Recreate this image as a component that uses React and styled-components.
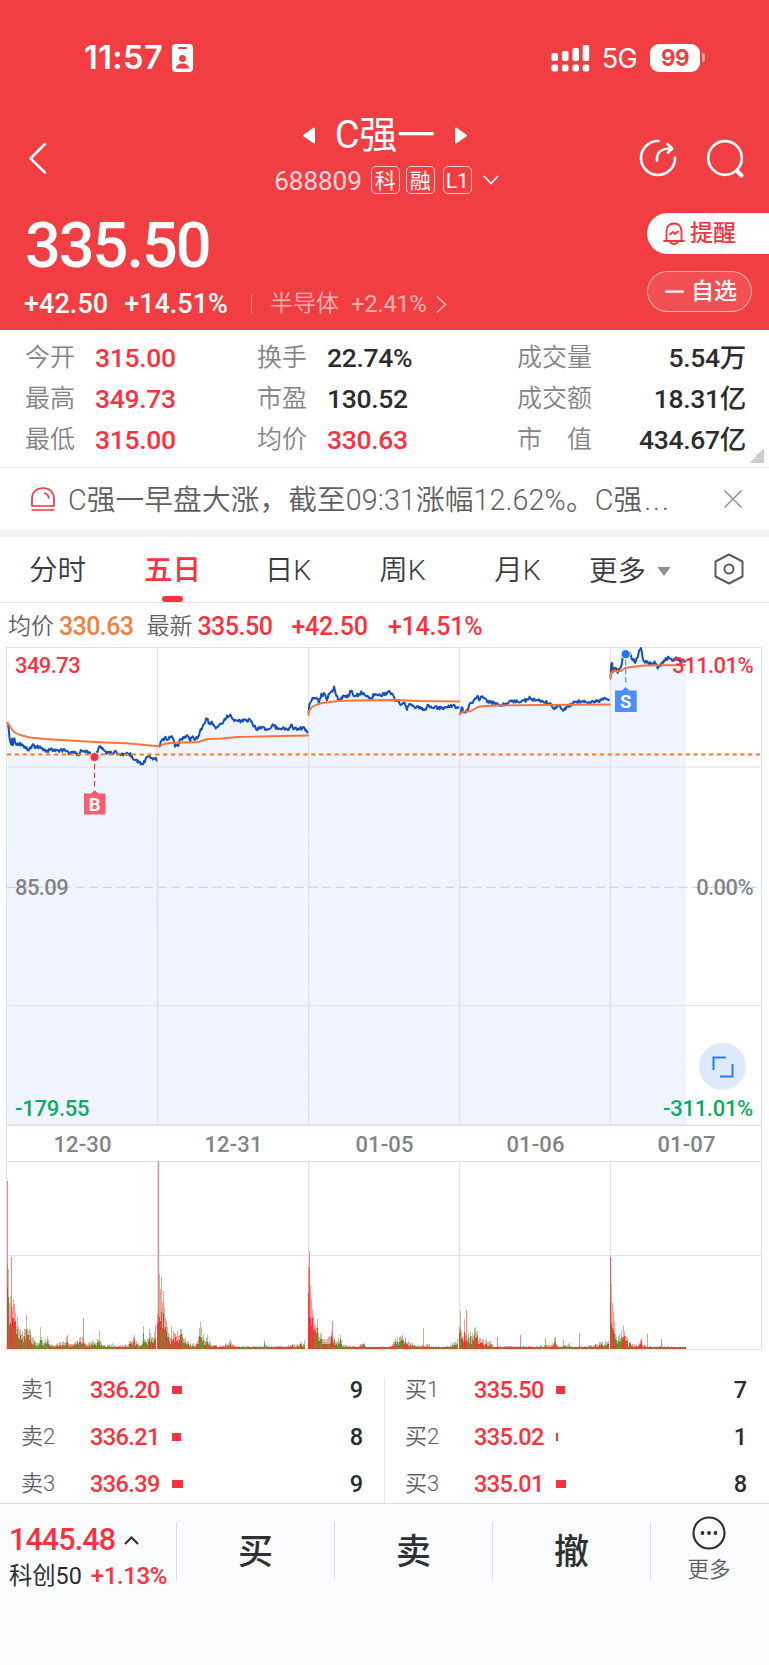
import React from 'react'
import styled, { createGlobalStyle } from 'styled-components'

const RED = '#f9323f'
const GREEN = '#0bab5f'
const INK = '#2c2c2e'

const GlobalStyle = createGlobalStyle`
  * { box-sizing: border-box; }
  body {
    margin: 0;
    background: #fff;
    font-family: Roboto, "Noto Sans CJK SC", sans-serif;
    color: ${INK};
  }
  svg { display: block; flex: none; }
`

const Page = styled.div`
  width: 769px;
  height: 1665px;
  display: flex;
  flex-direction: column;
  overflow: hidden;
  background: #fff;
`

const Text = styled.span`
  font-size: ${p => p.$size}px;
  line-height: ${p => p.$line || 40}px;
  font-weight: ${p => p.$weight || 400};
  color: ${p => p.$color || 'inherit'};
  letter-spacing: ${p => p.$track || 0}px;
  margin-left: ${p => p.$gap || 0}px;
  white-space: pre;
`

/* ---------- header ---------- */

const Header = styled.header`
  height: 330px;
  flex: none;
  background: #f03e42;
  color: #fff;
  display: flex;
  flex-direction: column;
`

const StatusBar = styled.div`
  height: 101px;
  padding: 14px 64px 0 84px;
  display: flex;
  align-items: center;
  justify-content: space-between;
`

const StatusSide = styled.div`
  display: flex;
  align-items: center;
`

const Clock = styled.span`
  font: 600 32.5px/40px Inter, sans-serif;
  letter-spacing: 0.4px;
  margin-right: 9px;
`

const Network = styled.span`
  font: 400 27px/40px Inter, sans-serif;
  letter-spacing: -0.6px;
  margin: 2px 13px 0 12px;
`

const Battery = styled.div`
  width: 50px;
  height: 28px;
  border-radius: 9px;
  background: #fff;
  color: #f03e42;
  font: 700 22.5px/28px Inter, sans-serif;
  letter-spacing: -0.5px;
  text-align: center;
`

const BatteryNub = styled.div`
  width: 3px;
  height: 9px;
  margin-left: 2px;
  border-radius: 0 3px 3px 0;
  background: rgba(255, 255, 255, 0.5);
`

const NavBar = styled.div`
  height: 108px;
  padding: 14px 25px 0 28px;
  display: grid;
  grid-template-columns: 130px 1fr 130px;
`

const NavSide = styled.div`
  display: flex;
  align-items: center;
  gap: 27px;
  height: 86px;
  justify-content: ${p => (p.$end ? 'flex-end' : 'flex-start')};
`

const NavTitle = styled.div`
  display: flex;
  flex-direction: column;
  align-items: center;
`

const TitleRow = styled.div`
  display: flex;
  align-items: center;
  gap: 20px;
  height: 41px;
  margin-right: 2px;
`

const CodeRow = styled.div`
  display: flex;
  align-items: center;
  height: 28px;
  margin: 10px 0 0 1px;
`

const Tag = styled.span`
  width: 29px;
  height: 28px;
  border: 1px solid rgba(255, 255, 255, 0.75);
  border-radius: 5px;
  margin-left: ${p => p.$gap}px;
  font-size: 21px;
  line-height: 28px;
  font-weight: ${p => p.$weight || 400};
  text-align: center;
`

const Quote = styled.div`
  height: 121px;
  display: flex;
  justify-content: space-between;
`

const QuoteMain = styled.div`
  padding-left: 25px;
  display: flex;
  flex-direction: column;
`

const BigPrice = styled.div`
  font-size: 63px;
  font-weight: 500;
  line-height: 73px;
  letter-spacing: -2px;
`

const ChangeRow = styled.div`
  display: flex;
  align-items: center;
  height: 40px;
  margin: 2px 0 0 -1px;
`

const Divider = styled.div`
  width: 1px;
  height: ${p => p.$h}px;
  background: ${p => p.$color};
  margin: ${p => p.$margin || 0};
`

const QuoteActions = styled.div`
  width: 122px;
  padding-top: 4px;
  display: flex;
  flex-direction: column;
  gap: 17px;
`

const Pill = styled.div`
  display: flex;
  align-items: center;
  height: 41px;
  width: ${p => (p.$solid ? 122 : 105)}px;
  padding-left: ${p => (p.$solid ? 16 : 17)}px;
  border-radius: ${p => (p.$solid ? '21px 0 0 21px' : '21px')};
  border: ${p => (p.$solid ? 'none' : '1px solid rgba(255,255,255,0.55)')};
  background: ${p => (p.$solid ? '#fff' : 'rgba(255,255,255,0.1)')};
  color: ${p => (p.$solid ? RED : '#fff')};
`

/* ---------- key figures ---------- */

const Stats = styled.section`
  height: 138px;
  flex: none;
  display: grid;
  grid-template-columns: 232px 260px 229px;
  padding: 7px 0 0 25px;
  border-bottom: 1px solid #e9e9ec;
  background: linear-gradient(135deg, transparent 50%, #ccc 50%) no-repeat 749px 118px / 15px 15px;
`

const StatColumn = styled.div`
  display: flex;
  flex-direction: column;
`

const StatLine = styled.div`
  display: flex;
  height: 41px;
  align-items: center;
  justify-content: ${p => (p.$spread ? 'space-between' : 'flex-start')};
`

const StatLabel = styled.span`
  font-size: 25px;
  font-weight: 350;
  line-height: 41px;
  width: ${p => (p.$wide ? 90 : 70)}px;
  color: #838386;
  white-space: pre;
`

const StatValue = styled.span`
  font-size: 26.5px;
  font-weight: 500;
  line-height: 41px;
  letter-spacing: -0.3px;
  color: ${p => (p.$up ? RED : INK)};
`

/* ---------- news strip and tabs ---------- */

const News = styled.section`
  height: 62px;
  flex: none;
  display: flex;
  align-items: center;
  padding: 0 27px 0 31px;
`

const NewsText = styled.span`
  flex: 1;
  margin-left: 13px;
  padding-top: 3px;
  font-size: 28.7px;
  font-weight: 350;
  line-height: 59px;
  letter-spacing: 0.1px;
  color: #5f5f62;
  white-space: pre;
`

const Ellipsis = styled.span`
  margin-left: 2px;
  letter-spacing: 2px;
`

const Band = styled.div`
  height: 7px;
  flex: none;
  background: #f2f4fa;
`

const Tabs = styled.nav`
  height: 66px;
  flex: none;
  display: flex;
  border-bottom: 1px solid #e2e2e5;
`

const Tab = styled.div`
  width: ${p => p.$w || 115}px;
  display: flex;
  flex-direction: column;
  align-items: center;
  font-size: 28.5px;
  line-height: 59px;
  padding-top: 4px;
  font-weight: ${p => (p.$on ? 500 : 350)};
  color: ${p => (p.$on ? RED : '#3c3c3f')};
`

const TabMark = styled.div`
  width: 21px;
  height: 6px;
  margin-top: -4px;
  border-radius: 3px;
  background: ${RED};
`

const TabMore = styled.div`
  display: flex;
  align-items: center;
  gap: 11px;
  margin-left: 13px;
  font-size: 28.5px;
  font-weight: 350;
  line-height: 61px;
  padding-top: 3px;
  color: #3c3c3f;
`

const TabSettings = styled.div`
  display: flex;
  align-items: center;
  margin-left: 43px;
  padding-bottom: 1px;
`

const Legend = styled.div`
  height: 37px;
  flex: none;
  display: flex;
  align-items: center;
  padding: 11px 0 0 8px;
`

/* ---------- charts ---------- */

const ChartBox = styled.section`
  position: relative;
  height: 715px;
  flex: none;
`

const ChartLabel = styled.span`
  position: absolute;
  top: ${p => p.$top}px;
  ${p => (p.$right ? 'right: 16px;' : 'left: 15px;')}
  font-size: 22px;
  font-weight: ${p => p.$weight || 500};
  line-height: 26px;
  letter-spacing: ${p => p.$track || -0.6}px;
  color: ${p => p.$color};
`

const DateRow = styled.div`
  position: absolute;
  left: 7px;
  top: 486px;
  width: 755px;
  height: 36px;
  display: grid;
  grid-template-columns: repeat(5, 151px);
  text-align: center;
  font-size: 22px;
  line-height: 37px;
  font-weight: 500;
  letter-spacing: 0.1px;
  color: #838386;
`

const Expand = styled.div`
  position: absolute;
  left: 699px;
  top: 403px;
  width: 47px;
  height: 47px;
  border-radius: 50%;
  background: #dfe9fe;
  display: flex;
  align-items: center;
  justify-content: center;
`

/* ---------- order book ---------- */

const Book = styled.section`
  height: 148px;
  flex: none;
  padding-top: 12px;
  display: grid;
  grid-template-columns: 384px 385px;
`

const BookSide = styled.div`
  margin-top: ${p => (p.$line ? 11 : 0)}px;
  padding-top: ${p => (p.$line ? 0 : 11)}px;
  border-left: ${p => (p.$line ? '1px solid #e6e6ea' : 'none')};
  padding-left: ${p => (p.$line ? 20 : 21)}px;
  padding-right: ${p => (p.$line ? 22 : 21)}px;
`

const BookRow = styled.div`
  display: grid;
  grid-template-columns: 69px 82px 1fr auto;
  align-items: center;
  height: 47px;
  padding-bottom: 23px;
`

const SizeBar = styled.div`
  height: 8px;
  background: ${RED};
`

/* ---------- bottom bar ---------- */

const BottomBar = styled.footer`
  flex: 1;
  border-top: 1px solid #dcdde5;
  background: #fafbfd;
  display: flex;
  align-items: flex-start;
`

const IndexCell = styled.div`
  width: 176px;
  padding: 16px 0 0 9px;
  display: flex;
  flex-direction: column;
`

const IndexLine = styled.div`
  display: flex;
  align-items: center;
  height: ${p => p.$h}px;
`

const Action = styled.div`
  width: ${p => p.$w || 158}px;
  height: 58px;
  margin-top: 18px;
  border-left: 1px solid #dcdce2;
  font-size: 35px;
  font-weight: 500;
  line-height: 62px;
  text-align: center;
  color: #303033;
`

const MoreAction = styled(Action)`
  flex: 1;
  display: flex;
  flex-direction: column;
  align-items: center;
  padding-right: 2px;
  font-size: 21.5px;
  font-weight: 350;
  line-height: 30px;
  color: #5f5f62;
  svg { margin-top: -6px; margin-bottom: 5px; }
`

/* ---------- data ---------- */

const stats = [
  [['今开', '315.00', true], ['最高', '349.73', true], ['最低', '315.00', true]],
  [['换手', '22.74%'], ['市盈', '130.52'], ['均价', '330.63', true]],
  [['成交量', '5.54万'], ['成交额', '18.31亿'], ['市　值', '434.67亿']],
]

const asks = [['卖1', '336.20', 10, 9], ['卖2', '336.21', 9, 8], ['卖3', '336.39', 11, 9]]
const bids = [['买1', '335.50', 9, 7], ['买2', '335.02', 2, 1], ['买3', '335.01', 10, 8]]

const priceDays = [
  [8,83, 9,90, 10,102, 11,106, 12,98, 13,106, 14,98, 15,102, 16,105, 20,104, 22,106, 25,106, 27,109, 29,110, 31,107, 33,104, 35,107, 40,107, 42,109, 48,111, 51,109, 55,111, 64,110, 68,113, 74,113, 79,114, 82,110, 86,111, 89,113, 91,115, 97,113, 99,107, 102,108, 105,110, 106,113, 110,113, 115,112, 120,114, 130,114, 133,118, 137,121, 142,124, 145,121, 147,117, 149,117, 152,119, 154,117, 157,120],
  [159,108, 161,101, 165,98, 168,99, 171,96, 174,102, 175,106, 178,106, 180,100, 184,97, 187,96, 190,100, 192,97, 195,100, 198,97, 200,91, 204,84, 206,79, 207,78, 209,83, 212,83, 215,86, 216,89, 219,84, 223,84, 226,77, 231,75, 233,81, 236,80, 240,81, 250,80, 254,86, 257,89, 262,87, 266,90, 270,88, 273,84, 276,88, 283,88, 285,90, 290,88, 291,85, 294,89, 304,88, 308,92],
  [308.5,73, 309,64, 311,62, 313,57, 315,60, 317,57, 319,63, 321,55, 325,54, 327,59, 330,53, 333,50, 334,46, 336,55, 338,59, 341,59, 343,56, 346,57, 349,55, 351,50, 353,55, 358,55, 362,52, 364,55, 371,58, 375,54, 379,56, 384,54, 389,52, 392,54, 395,60, 399,62, 402,65, 405,63, 407,69, 410,63, 413,67, 418,67, 422,69, 425,71, 428,65, 432,67, 440,68, 447,67, 454,65, 456,69, 459,67],
  [460,74, 462,67, 464,72, 466,73, 470,64, 473,62, 476,58, 478,55, 479,61, 482,56, 485,60, 489,62, 493,63, 500,65, 505,64, 509,62, 521,61, 527,60, 530,57, 533,60, 540,61, 546,62, 551,65, 555,69, 559,65, 563,70, 567,67, 571,65, 574,61, 583,62, 592,62, 598,61, 604,59, 610,59],
  [610.5,37, 611,25, 612,23, 613,32, 615,28, 618,32, 620,27, 622,24, 623,14, 624,9, 626,15, 630,13, 632,18, 635,22, 637,19, 639,10, 641,8, 643,20, 646,22, 650,24, 655,22, 658,28, 662,23, 665,20, 669,17, 673,20, 676,18, 680,21, 686,21],
]

const averageDays = [
  [7,83, 8,83, 11,88, 14,92, 20,95, 30,97.5, 45,99, 70,100.5, 95,102, 130,103.5, 145,105, 156,106, 160,106, 164,104, 170,103, 198,102, 208,99, 222,98.5, 238,97, 260,96.5, 308,95.5],
  [308.5,75, 309,71, 312,67, 316,65, 322,63, 330,62, 338,61, 355,60.5, 395,60, 420,61, 459,61.5],
  [459.5,74.5, 463,71.5, 470,71.5, 473,70, 478,67, 485,66, 500,65.5, 540,65, 610,64.5],
  [610.5,39, 611,33, 613,31, 621,31, 625,28, 635,26.5, 645,25.5, 685,25],
]

// x, bar height
const volumeDays = [
  [7,84, 8,80, 9,46, 10,52, 12,42, 13,50, 15,36, 17,32, 20,20, 25,20, 26,34, 27,20, 30,19, 35,8, 39,8, 40,22, 41,12, 45,10, 47,13, 49,5, 56,5, 60,7, 67,14, 68,6, 75,8, 80,12, 82,12, 86,5, 92,9, 95,6, 99,18, 102,4, 112,6, 115,3, 125,5, 130,8, 134,14, 138,6, 142,8, 143,23, 145,9, 148,10, 149,20, 152,12, 155,24],
  [157,35, 159,75, 161,72, 163,58, 164,42, 166,28, 168,16, 171,23, 174,16, 181,20, 187,8, 192,5, 197,8, 200,27, 203,15, 207,14, 210,6, 216,4, 220,3, 230,9, 235,3, 263,3, 264,9, 267,3, 290,4, 304,9],
  [308,82, 309,80, 310,64, 311,50, 313,33, 315,24, 317,30, 318,16, 321,16, 324,10, 331,18, 334,11, 340,14, 343,4, 355,3, 363,6, 366,2, 390,3, 397,12, 402,14, 408,8, 415,4, 422,4, 426,5, 440,2, 450,4, 457,10],
  [459,22, 460,38, 462,13, 464,30, 465,14, 470,18, 475,22, 480,11, 485,9, 490,8, 493,3, 519,3, 525,3, 540,4, 550,4, 554,11, 558,3, 569,6, 572,2, 590,4, 600,7, 608,8],
  [610,92, 611,65, 612,46, 613,38, 614,28, 616,12, 619,15, 623,23, 626,12, 632,5, 638,4, 641,11, 644,4, 650,3, 668,3, 672,1.5, 685,1],
]

// x, height, rising
const spikes = [
  [7,168,1], [11,92,1], [83,31,1], [158,188,1], [309,98,1], [332,28,1], [423,21,0], [466,39,1],
  [497,12,1], [520,14,1], [545,11,0], [555,12,0], [563,9,0], [579,16,0], [610,92,1], [647,15,0], [661,10,1],
]

function pairs(flat) {
  const out = []
  for (let i = 0; i < flat.length; i += 2) out.push([flat[i], flat[i + 1]])
  return out
}

function noise(n) {
  const v = Math.sin(n * 127.1 + 11.7) * 43758.5453
  return v - Math.floor(v)
}

function valueAt(pts, x) {
  for (let i = 1; i < pts.length; i++) {
    if (x <= pts[i][0]) {
      const [x0, y0] = pts[i - 1]
      const [x1, y1] = pts[i]
      return y0 + ((y1 - y0) * (x - x0)) / (x1 - x0)
    }
  }
  return pts[pts.length - 1][1]
}

function tickPath(flat) {
  const pts = pairs(flat)
  const end = pts[pts.length - 1][0]
  let d = ''
  for (let x = pts[0][0]; x <= end; x += 0.8) {
    const y = Math.max(8, valueAt(pts, x) + (noise(x) - 0.5) * 3.2)
    d += `${d ? 'L' : 'M'}${x.toFixed(1)} ${y.toFixed(1)}`
  }
  return d
}

const linePath = flat => 'M' + pairs(flat).map(p => p.join(' ')).join('L')

function areaPath(flat, next) {
  const pts = pairs(flat)
  return `M${pts[0][0] - 2} 486L${linePath(flat).slice(1)}L${next} ${pts[pts.length - 1][1]}V486Z`
}

const dayEnds = [157, 308, 459.5, 610, 686]

function VolumeBars() {
  const bars = []
  volumeDays.forEach((flat, day) => {
    const pts = pairs(flat)
    const keys = pts.map(p => p[0])
    for (let x = pts[0][0]; x <= pts[pts.length - 1][0]; x++) {
      const h = valueAt(pts, x) * (keys.includes(x) ? 1 : 0.5 + noise(x) * 0.55)
      const open = x - pts[0][0]
      const up = noise(x * 3.3 + day) > (day === 0 ? 0.6 : open < 8 ? 0.35 : 0.48)
      const main = up ? '#ff2f38' : '#579a31'
      const other = noise(x * 5.1) > 0.5 ? '#ff2f38' : '#579a31'
      bars.push(<rect key={`a${x}`} x={x} y={709 - h} width="1" height={h} fill={main} opacity="0.5" />)
      const low = Math.max(2, h * (0.4 + noise(x * 1.7) * 0.4))
      bars.push(<rect key={`b${x}`} x={x} y={709 - low} width="1" height={low} fill={main} />)
      bars.push(<rect key={`c${x}`} x={x} y={709 - low * 0.7} width="1" height={low * 0.7} fill={other} opacity="0.4" />)
    }
  })
  spikes.forEach(([x, h, up]) => {
    bars.push(<rect key={`s${x}`} x={x} y={709 - h} width="1" height={h} fill={up ? '#ff2f38' : '#579a31'} opacity="0.6" />)
  })
  return <g shapeRendering="crispEdges">{bars}</g>
}

function Charts() {
  return (
    <ChartBox>
      <svg width="769" height="715" viewBox="0 0 769 715">
        {priceDays.map((d, i) => <path key={i} d={areaPath(d, dayEnds[i])} fill="#eff4ff" />)}
        <g stroke="#e0e1e4" fill="none">
          <path d="M6.5 7V709.5H761.5V7.5H6.5M6.5 127H761.5M6.5 365.5H761.5M6.5 521.5H761.5M6.5 615.5H761.5" />
          <path d="M6.5 485.2H761.5" strokeWidth="1.6" />
          <path d="M157.6 7V485M308.6 7V485M459.6 7V485M610.4 7V485M157.6 521V709M308.6 521V709M459.6 521V709M610.4 521V709" strokeWidth="1.3" />
        </g>
        <path d="M7 247.3H761" stroke="#c9d6e2" strokeWidth="1.3" strokeDasharray="9 4.7" />
        {priceDays.map((d, i) => (
          <path key={i} d={tickPath(d)} fill="none" stroke="#1750b8" strokeWidth="2" strokeLinejoin="round" />
        ))}
        {averageDays.map((d, i) => (
          <path key={i} d={linePath(d)} fill="none" stroke="#fb7439" strokeWidth="1.9" strokeLinejoin="round" strokeLinecap="round" />
        ))}
        <path d="M7 114.5H761" stroke="#ff7a12" strokeWidth="2" strokeDasharray="4.3 3.5" />

        <path d="M94.5 124V148" stroke="#f9323f" strokeWidth="1.1" strokeDasharray="5.5 3" />
        <circle cx="94.5" cy="117" r="4.6" fill="#f9323f" stroke="#fff" strokeWidth="1" />
        <path d="M84 153.5H91L94.7 150L98.4 153.5H105.5V174.5H84Z" fill="#f85e6b" />
        <text x="94.7" y="170.5" textAnchor="middle" fontFamily="Roboto" fontWeight="700" fontSize="18.5" fill="#fff">B</text>

        <path d="M625.7 20V45" stroke="#4d8bfa" strokeWidth="1.1" strokeDasharray="5.5 3" />
        <circle cx="625.7" cy="14.2" r="4.6" fill="#1f74ff" stroke="#fff" strokeWidth="1" />
        <path d="M615 50.5H622L625.7 47L629.4 50.5H636.7V72H615Z" fill="#4d8dfc" />
        <text x="625.8" y="67.7" textAnchor="middle" fontFamily="Roboto" fontWeight="700" fontSize="18.5" fill="#fff">S</text>
        <VolumeBars />
      </svg>
      <ChartLabel $top={13} $color={RED}>349.73</ChartLabel>
      <ChartLabel $top={13} $color={RED} $right>311.01%</ChartLabel>
      <ChartLabel $top={235} $color="#838386">85.09</ChartLabel>
      <ChartLabel $top={235} $color="#838386" $right>0.00%</ChartLabel>
      <ChartLabel $top={456} $color={GREEN} $track={-0.25}>-179.55</ChartLabel>
      <ChartLabel $top={456} $color={GREEN} $track={-0.3} $right>-311.01%</ChartLabel>
      <Expand>
        <svg width="22" height="22" viewBox="0 0 22 22" fill="none" stroke="#2b7bff" strokeWidth="2">
          <path d="M1.5 14V1.5H14M20.5 8V20.5H8" />
        </svg>
      </Expand>
      <DateRow>
        {['12-30', '12-31', '01-05', '01-06', '01-07'].map(d => <span key={d}>{d}</span>)}
      </DateRow>
    </ChartBox>
  )
}

function TopHeader() {
  return (
    <Header>
      <StatusBar>
        <StatusSide>
          <Clock>11:57</Clock>
          <svg width="21" height="28" viewBox="0 0 21 28">
            <rect width="21" height="28" rx="4" fill="#fff" />
            <rect x="6" y="3" width="9" height="2" rx="1" fill="#f03e42" />
            <circle cx="10.5" cy="14.5" r="3.4" fill="#f03e42" />
            <path d="M4 24.5C4 21 7 19.5 10.5 19.5S17 21 17 24.5Z" fill="#f03e42" />
          </svg>
        </StatusSide>
        <StatusSide>
          <svg width="39" height="28" viewBox="0 0 39 28" fill="#fff">
            <rect x="0.5" y="9" width="6.5" height="8" rx="2" />
            <rect x="11" y="7" width="6.5" height="10" rx="2" />
            <rect x="21.5" y="4" width="6.5" height="13" rx="2" />
            <rect x="31.7" y="1" width="6.5" height="16" rx="2" />
            {[0.5, 11, 21.5, 31.7].map(x => <rect key={x} x={x} y="20.5" width="6.5" height="7" rx="2" />)}
          </svg>
          <Network>5G</Network>
          <Battery>99</Battery>
          <BatteryNub />
        </StatusSide>
      </StatusBar>

      <NavBar>
        <NavSide>
          <svg width="20" height="34" viewBox="0 0 20 34" fill="none" stroke="#fff" strokeWidth="2.5" strokeLinecap="round" strokeLinejoin="round">
            <path d="M17 3L2.5 17.5L17 31.5" />
          </svg>
        </NavSide>
        <NavTitle>
          <TitleRow>
            <svg width="12" height="17" viewBox="0 0 12 17">
              <path d="M11 1.5V15.5L1 8.5Z" fill="#fff" stroke="#fff" strokeWidth="2" strokeLinejoin="round" />
            </svg>
            <Text $size={38} $line={41}>C强一</Text>
            <svg width="12" height="17" viewBox="0 0 12 17">
              <path d="M1 1.5V15.5L11 8.5Z" fill="#fff" stroke="#fff" strokeWidth="2" strokeLinejoin="round" />
            </svg>
          </TitleRow>
          <CodeRow>
            <Text $size={26} $color="rgba(255,255,255,0.82)" $line={30} style={{ paddingTop: 2 }}>688809</Text>
            <Tag $gap={9}>科</Tag>
            <Tag $gap={6}>融</Tag>
            <Tag $gap={8}>L1</Tag>
            <svg width="16" height="10" viewBox="0 0 16 10" fill="none" stroke="#fff" strokeWidth="1.6" style={{ marginLeft: 11 }}>
              <path d="M1 1L8 8.6L15 1" />
            </svg>
          </CodeRow>
        </NavTitle>
        <NavSide $end>
          <svg width="40" height="40" viewBox="0 0 40 40" fill="none" stroke="#fff" strokeWidth="2.7" strokeLinecap="round" strokeLinejoin="round">
            <path d="M20.5 3A17 17 0 1 0 37 19.5" />
            <path d="M19 22.5C18.5 14 23 10.5 33 10.5M29.5 6L34.2 10.6L30 14.5" />
          </svg>
          <svg width="39" height="40" viewBox="0 0 39 40" fill="none" stroke="#fff" strokeWidth="2.7" strokeLinecap="round">
            <circle cx="20" cy="20" r="16.8" />
            <path d="M32 33L36.5 37.5" strokeWidth="4" />
          </svg>
        </NavSide>
      </NavBar>

      <Quote>
        <QuoteMain>
          <BigPrice>335.50</BigPrice>
          <ChangeRow>
            <Text $size={27} $weight={500} $track={0.05}>+42.50</Text>
            <Text $size={27} $weight={500} $gap={16}>+14.51%</Text>
            <Divider $h={20} $color="rgba(255,255,255,0.45)" $margin="0 18px 0 23px" />
            <Text $size={23} $weight={350} $color="rgba(255,255,255,0.6)">半导体</Text>
            <Text $size={24} $gap={12} $color="rgba(255,255,255,0.6)" $track={-0.4}>+2.41%</Text>
            <svg width="11" height="19" viewBox="0 0 11 19" fill="none" stroke="#fff" strokeOpacity="0.65" strokeWidth="1.5" style={{ marginLeft: 9 }}>
              <path d="M1 1.5L9.5 9.5L1 17.5" />
            </svg>
          </ChangeRow>
        </QuoteMain>
        <QuoteActions>
          <Pill $solid>
            <svg width="22" height="24" viewBox="0 0 22 24" fill="none" stroke={RED} strokeWidth="1.8" strokeLinecap="round" strokeLinejoin="round">
              <path d="M3.5 17.5V9.5C3.5 4.5 6.5 1.5 11 1.5S18.5 4.5 18.5 9.5V17.5M1 19H21M7 19.5C8 22.8 14 22.8 15 19.5M7 12.5L9.8 9.8L12 12L15 9.5" />
            </svg>
            <Text $size={23} $weight={500} $gap={5} $line={42}>提醒</Text>
          </Pill>
          <Pill>
            <svg width="19" height="3" viewBox="0 0 19 3"><rect y="0.5" width="19" height="2.2" rx="1" fill="#fff" /></svg>
            <Text $size={23} $weight={500} $gap={7} $line={42}>自选</Text>
          </Pill>
        </QuoteActions>
      </Quote>
    </Header>
  )
}

function BookRows({ rows, line }) {
  return (
    <BookSide $line={line}>
      {rows.map(([label, price, size, count]) => (
        <BookRow key={label}>
          <Text $size={22} $weight={350} $line={24} $color="#606063">{label}</Text>
          <Text $size={23.5} $weight={500} $line={24} $color={RED} $track={-0.6}>{price}</Text>
          <SizeBar style={{ width: size }} />
          <Text $size={23.5} $weight={500} $line={24}>{count}</Text>
        </BookRow>
      ))}
    </BookSide>
  )
}

function App() {
  return (
    <Page>
      <GlobalStyle />
      <TopHeader />

      <Stats>
        {stats.map((column, i) => (
          <StatColumn key={i}>
            {column.map(([label, value, up]) => (
              <StatLine key={label} $spread={i === 2}>
                <StatLabel $wide={i === 2}>{label}</StatLabel>
                <StatValue $up={up}>{value}</StatValue>
              </StatLine>
            ))}
          </StatColumn>
        ))}
      </Stats>

      <News>
        <svg width="24" height="25" viewBox="0 0 24 25" fill="none" stroke={RED} strokeWidth="1.7">
          <path d="M1 19V11.5C1 5.5 5.5 1 12 1S23 5.5 23 11.5V19Z M0.5 23H23.5 M13 6C16 6.5 17.5 8.5 17.8 11.5" />
        </svg>
        <NewsText>C强一早盘大涨，截至09:31涨幅12.62%。C强<Ellipsis>...</Ellipsis></NewsText>
        <svg width="18" height="18" viewBox="0 0 18 18" fill="none" stroke="#8a8a8d" strokeWidth="1.4">
          <path d="M0.5 0.5L17.5 17.5M17.5 0.5L0.5 17.5" />
        </svg>
      </News>
      <Band />

      <Tabs>
        <Tab $w={115}>分时</Tab>
        <Tab $w={115} $on>五日<TabMark /></Tab>
        <Tab $w={116}>日K</Tab>
        <Tab $w={113}>周K</Tab>
        <Tab $w={117}>月K</Tab>
        <TabMore>
          更多
          <svg width="14" height="9" viewBox="0 0 14 9"><path d="M0.5 0H13.5L7 9Z" fill="#8f8f92" /></svg>
        </TabMore>
        <TabSettings>
          <svg width="30" height="32" viewBox="0 0 30 32" fill="none" stroke="#5c5c5f" strokeWidth="2" strokeLinejoin="round">
            <path d="M15 1.5L28.5 8.5V23.5L15 30.5L1.5 23.5V8.5Z" />
            <circle cx="15" cy="16" r="4.5" />
          </svg>
        </TabSettings>
      </Tabs>

      <Legend>
        <Text $size={23} $color="#5f5f62" $weight={350}>均价</Text>
        <Text $size={25} $weight={500} $color="#ee8044" $gap={5} $track={-0.6}>330.63</Text>
        <Text $size={23} $color="#5f5f62" $gap={13} $weight={350}>最新</Text>
        <Text $size={25} $weight={500} $color={RED} $gap={5} $track={-0.5}>335.50</Text>
        <Text $size={25} $weight={500} $color={RED} $gap={19} $track={-0.2}>+42.50</Text>
        <Text $size={25} $weight={500} $color={RED} $gap={20} $track={-0.2}>+14.51%</Text>
      </Legend>

      <Charts />

      <Book>
        <BookRows rows={asks} />
        <BookRows rows={bids} line />
      </Book>

      <BottomBar>
        <IndexCell>
          <IndexLine $h={40}>
            <Text $size={30.5} $weight={500} $color={RED} $track={-0.9}>1445.48</Text>
            <svg width="15" height="9" viewBox="0 0 15 9" fill="none" stroke={INK} strokeWidth="2" style={{ marginLeft: 9 }}>
              <path d="M1 8L7.5 1.5L14 8" />
            </svg>
          </IndexLine>
          <IndexLine $h={32}>
            <Text $size={23.3} $line={32}>科创50</Text>
            <Text $size={24} $weight={500} $line={32} $color={RED} $gap={9} $track={-0.4}>+1.13%</Text>
          </IndexLine>
        </IndexCell>
        <Action>买</Action>
        <Action>卖</Action>
        <Action>撤</Action>
        <MoreAction>
          <svg width="34" height="34" viewBox="0 0 34 34">
            <circle cx="17" cy="17" r="15.5" fill="none" stroke="#303033" strokeWidth="2.2" />
            {[10.5, 17, 23.5].map(x => <circle key={x} cx={x} cy="17" r="1.9" fill="#303033" />)}
          </svg>
          更多
        </MoreAction>
      </BottomBar>
    </Page>
  )
}

export default App
